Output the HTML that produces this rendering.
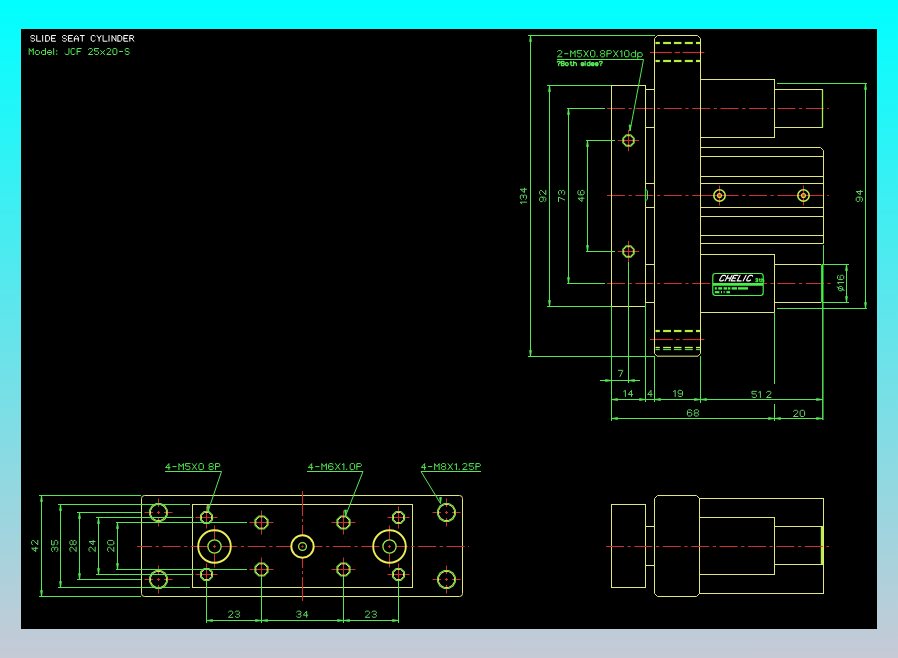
<!DOCTYPE html>
<html><head><meta charset="utf-8"><style>
html,body{margin:0;padding:0;width:898px;height:658px;overflow:hidden}
body{background:linear-gradient(to bottom,#00ffff 0px,#c6cad6 658px)}
#cad{position:absolute;left:21px;top:29px;width:856px;height:600px;background:#000}
svg{position:absolute;left:0;top:0}
text{font-family:"Liberation Sans",sans-serif}
</style></head><body>
<div id="cad"></div>
<svg width="898" height="658" viewBox="0 0 898 658">
<line x1="607" y1="108.5" x2="829" y2="108.5" stroke="#cc3030" stroke-width="1.2" stroke-dasharray="18 3.6 3.2 3.6" stroke-dashoffset="0"/>
<line x1="607" y1="195.5" x2="829" y2="195.5" stroke="#cc3030" stroke-width="1.2" stroke-dasharray="18 3.6 3.2 3.6" stroke-dashoffset="0"/>
<line x1="607" y1="283.5" x2="832" y2="283.5" stroke="#cc3030" stroke-width="1.2" stroke-dasharray="18 3.6 3.2 3.6" stroke-dashoffset="0"/>
<line x1="650" y1="52.5" x2="671.8" y2="52.5" stroke="#cc3030" stroke-width="1.2" />
<line x1="674.7" y1="52.5" x2="680.1" y2="52.5" stroke="#cc3030" stroke-width="1.2" />
<line x1="682.6" y1="52.5" x2="704.3" y2="52.5" stroke="#cc3030" stroke-width="1.2" />
<line x1="650" y1="339.5" x2="672.9" y2="339.5" stroke="#cc3030" stroke-width="1.2" />
<line x1="675.8" y1="339.5" x2="679.7" y2="339.5" stroke="#cc3030" stroke-width="1.2" />
<line x1="682.6" y1="339.5" x2="704.3" y2="339.5" stroke="#cc3030" stroke-width="1.2" />
<rect x="611.5" y="85.5" width="34" height="221" rx="0" fill="none" stroke="#e0e67a" stroke-width="1"/>
<rect x="645.5" y="89.5" width="9" height="213" rx="0" fill="none" stroke="#e0e67a" stroke-width="1"/>
<line x1="645.5" y1="127.5" x2="654.5" y2="127.5" stroke="#e0e67a" stroke-width="1" />
<line x1="645.5" y1="183.5" x2="654.5" y2="183.5" stroke="#e0e67a" stroke-width="1" />
<line x1="645.5" y1="207.5" x2="654.5" y2="207.5" stroke="#e0e67a" stroke-width="1" />
<line x1="645.5" y1="264.5" x2="654.5" y2="264.5" stroke="#e0e67a" stroke-width="1" />
<path d="M654.5 353.5 L654.5 38.5 L657.5 35.5 L697.5 35.5 L700.5 38.5 L700.5 353.5 L698 356.2 L657 356.2 Z" fill="none" stroke="#e0e67a" stroke-width="1"/>
<line x1="655.5" y1="43" x2="659.8" y2="43" stroke="#b8f040" stroke-width="2.2" />
<line x1="663.1" y1="43" x2="671" y2="43" stroke="#b8f040" stroke-width="2.2" />
<line x1="673.9" y1="43" x2="681.5" y2="43" stroke="#b8f040" stroke-width="2.2" />
<line x1="684.8" y1="43" x2="692.8" y2="43" stroke="#b8f040" stroke-width="2.2" />
<line x1="696" y1="43" x2="700" y2="43" stroke="#b8f040" stroke-width="2.2" />
<line x1="655.5" y1="61" x2="659.8" y2="61" stroke="#b8f040" stroke-width="2.2" />
<line x1="663.1" y1="61" x2="671" y2="61" stroke="#b8f040" stroke-width="2.2" />
<line x1="673.9" y1="61" x2="681.5" y2="61" stroke="#b8f040" stroke-width="2.2" />
<line x1="684.8" y1="61" x2="692.8" y2="61" stroke="#b8f040" stroke-width="2.2" />
<line x1="696" y1="61" x2="700" y2="61" stroke="#b8f040" stroke-width="2.2" />
<line x1="655.5" y1="331" x2="659.8" y2="331" stroke="#b8f040" stroke-width="2.2" />
<line x1="663.1" y1="331" x2="671" y2="331" stroke="#b8f040" stroke-width="2.2" />
<line x1="673.9" y1="331" x2="681.5" y2="331" stroke="#b8f040" stroke-width="2.2" />
<line x1="684.8" y1="331" x2="692.8" y2="331" stroke="#b8f040" stroke-width="2.2" />
<line x1="696" y1="331" x2="700" y2="331" stroke="#b8f040" stroke-width="2.2" />
<line x1="655.5" y1="347.5" x2="659.8" y2="347.5" stroke="#d8e860" stroke-width="1.3" />
<line x1="663.1" y1="347.5" x2="671" y2="347.5" stroke="#d8e860" stroke-width="1.3" />
<line x1="673.9" y1="347.5" x2="681.5" y2="347.5" stroke="#d8e860" stroke-width="1.3" />
<line x1="684.8" y1="347.5" x2="692.8" y2="347.5" stroke="#d8e860" stroke-width="1.3" />
<line x1="696" y1="347.5" x2="700" y2="347.5" stroke="#d8e860" stroke-width="1.3" />
<line x1="655.5" y1="349.5" x2="659.8" y2="349.5" stroke="#50d850" stroke-width="1.3" />
<line x1="663.1" y1="349.5" x2="671" y2="349.5" stroke="#50d850" stroke-width="1.3" />
<line x1="673.9" y1="349.5" x2="681.5" y2="349.5" stroke="#50d850" stroke-width="1.3" />
<line x1="684.8" y1="349.5" x2="692.8" y2="349.5" stroke="#50d850" stroke-width="1.3" />
<line x1="696" y1="349.5" x2="700" y2="349.5" stroke="#50d850" stroke-width="1.3" />
<rect x="700.5" y="79.5" width="74" height="58" rx="0" fill="none" stroke="#e0e67a" stroke-width="1"/>
<rect x="774.5" y="89.5" width="48" height="38" rx="0" fill="none" stroke="#e0e67a" stroke-width="1"/>
<line x1="822.5" y1="89.5" x2="822.5" y2="127.5" stroke="#a8ec48" stroke-width="1.3" />
<path d="M700.5 147.5 L820.5 147.5 L823.5 150.5 L823.5 243.5 L700.5 243.5" fill="none" stroke="#e0e67a" stroke-width="1"/>
<line x1="700.5" y1="156.5" x2="823.5" y2="156.5" stroke="#e0e67a" stroke-width="1" />
<line x1="700.5" y1="176.5" x2="823.5" y2="176.5" stroke="#e0e67a" stroke-width="1" />
<line x1="700.5" y1="183.5" x2="823.5" y2="183.5" stroke="#e0e67a" stroke-width="1" />
<line x1="700.5" y1="207.5" x2="823.5" y2="207.5" stroke="#e0e67a" stroke-width="1" />
<line x1="700.5" y1="216.5" x2="823.5" y2="216.5" stroke="#e0e67a" stroke-width="1" />
<line x1="700.5" y1="235.5" x2="823.5" y2="235.5" stroke="#e0e67a" stroke-width="1" />
<rect x="700.5" y="254.5" width="74" height="58" rx="0" fill="none" stroke="#e0e67a" stroke-width="1"/>
<path d="M821 264.5 L774.5 264.5 L774.5 302.5 L821 302.5" fill="none" stroke="#e0e67a" stroke-width="1"/>
<line x1="823.5" y1="245" x2="823.5" y2="264.5" stroke="#55e655" stroke-width="1" />
<line x1="822.3" y1="264.5" x2="822.3" y2="302.5" stroke="#40f040" stroke-width="2.4" />
<line x1="822.8" y1="302.5" x2="822.8" y2="420" stroke="#50e050" stroke-width="1.5" />
<line x1="617.8" y1="140.5" x2="639.2" y2="140.5" stroke="#cc3030" stroke-width="1" />
<line x1="628.5" y1="129.8" x2="628.5" y2="151.2" stroke="#cc3030" stroke-width="1" />
<polygon points="634.20,142.86 630.86,146.20 626.14,146.20 622.80,142.86 622.80,138.14 626.14,134.80 630.86,134.80 634.20,138.14" fill="none" stroke="#6ee63e" stroke-width="1.1"/>
<polygon points="633.27,142.48 630.48,145.27 626.52,145.27 623.73,142.48 623.73,138.52 626.52,135.73 630.48,135.73 633.27,138.52" fill="none" stroke="#e6ea6c" stroke-width="1.0"/>
<line x1="617.8" y1="251.5" x2="639.2" y2="251.5" stroke="#cc3030" stroke-width="1" />
<line x1="628.5" y1="240.8" x2="628.5" y2="262.2" stroke="#cc3030" stroke-width="1" />
<polygon points="634.20,253.86 630.86,257.20 626.14,257.20 622.80,253.86 622.80,249.14 626.14,245.80 630.86,245.80 634.20,249.14" fill="none" stroke="#6ee63e" stroke-width="1.1"/>
<polygon points="633.27,253.48 630.48,256.27 626.52,256.27 623.73,253.48 623.73,249.52 626.52,246.73 630.48,246.73 633.27,249.52" fill="none" stroke="#e6ea6c" stroke-width="1.0"/>
<line x1="709.5" y1="195.5" x2="729.5" y2="195.5" stroke="#cc3030" stroke-width="1" />
<line x1="719.5" y1="185.5" x2="719.5" y2="205.5" stroke="#cc3030" stroke-width="1" />
<circle cx="719.5" cy="195.5" r="5.7" fill="none" stroke="#c0f048" stroke-width="1.6"/>
<circle cx="719.5" cy="195.5" r="1.9" fill="none" stroke="#f0d040" stroke-width="1.3"/>
<line x1="793.5" y1="195.5" x2="813.5" y2="195.5" stroke="#cc3030" stroke-width="1" />
<line x1="803.5" y1="185.5" x2="803.5" y2="205.5" stroke="#cc3030" stroke-width="1" />
<circle cx="803.5" cy="195.5" r="5.7" fill="none" stroke="#c0f048" stroke-width="1.6"/>
<circle cx="803.5" cy="195.5" r="1.9" fill="none" stroke="#f0d040" stroke-width="1.3"/>
<line x1="645.5" y1="188.5" x2="645.5" y2="201.5" stroke="#50e050" stroke-width="1.3" />
<path d="M645.5 189 L647.5 191 L647.5 199 L645.5 201" fill="none" stroke="#50e050" stroke-width="1"/>
<path d="M715.5 273.5 L760.5 273.5 Q763.2 273.5 763.2 276.2 L763.2 292.8 Q763.2 295.5 760.5 295.5 L715.5 295.5 Q712.8 295.5 712.8 292.8 L712.8 276.2 Q712.8 273.5 715.5 273.5 Z" fill="#000" stroke="#48f048" stroke-width="1.2"/>
<line x1="713" y1="284.4" x2="763" y2="284.4" stroke="#48f048" stroke-width="2.8" />
<path d="M725.60 276.25 L725.10 275.32 L723.10 275.32 L721.60 276.25 L719.60 279.97 L720.10 280.90 L722.10 280.90 L723.60 279.97 M725.10 280.90 L728.10 275.32 M729.10 280.90 L732.10 275.32 M726.60 278.11 L730.60 278.11 M738.10 275.32 L734.10 275.32 L731.10 280.90 L735.10 280.90 M732.60 278.11 L735.60 278.11 M740.10 275.32 L737.10 280.90 L741.10 280.90 M743.10 280.90 L746.10 275.32 M752.60 276.25 L752.10 275.32 L750.10 275.32 L748.60 276.25 L746.60 279.97 L747.10 280.90 L749.10 280.90 L750.60 279.97" fill="none" stroke="#ffffff" stroke-width="1.15" stroke-linecap="round" stroke-linejoin="round"/>
<path d="M755.80 279.05 L756.30 278.50 L757.30 278.50 L757.80 279.05 L757.80 279.60 L757.30 280.15 L756.55 280.15 M757.30 280.15 L757.80 280.70 L757.80 281.25 L757.30 281.80 L756.30 281.80 L755.80 281.25 M759.80 278.50 L759.80 281.25 L760.30 281.80 L760.80 281.80 M759.30 279.60 L760.30 279.60 M761.80 278.50 L761.80 281.80 M761.80 280.15 L762.30 279.60 L763.30 279.60 L763.80 280.15 L763.80 281.80" fill="none" stroke="#48f048" stroke-width="1.1" stroke-linecap="round" stroke-linejoin="round"/>
<line x1="714.8" y1="288.4" x2="716.8" y2="288.4" stroke="#48f048" stroke-width="2.4" />
<line x1="718.2" y1="288.4" x2="722.2" y2="288.4" stroke="#48f048" stroke-width="2.4" />
<line x1="723.6" y1="288.4" x2="727" y2="288.4" stroke="#48f048" stroke-width="2.4" />
<line x1="727.8" y1="288.4" x2="730.4" y2="288.4" stroke="#48f048" stroke-width="2.4" />
<line x1="731.6" y1="288.4" x2="737" y2="288.4" stroke="#48f048" stroke-width="2.4" />
<line x1="738" y1="288.4" x2="748" y2="288.4" stroke="#48f048" stroke-width="2.4" />
<line x1="714.8" y1="292.2" x2="719.4" y2="292.2" stroke="#48f048" stroke-width="2.2" />
<line x1="721" y1="292.2" x2="722" y2="292.2" stroke="#48f048" stroke-width="2.2" />
<line x1="723.6" y1="292.2" x2="724.6" y2="292.2" stroke="#48f048" stroke-width="2.2" />
<line x1="726.4" y1="292.2" x2="730" y2="292.2" stroke="#48f048" stroke-width="2.2" />
<line x1="528" y1="35.5" x2="655" y2="35.5" stroke="#55e655" stroke-width="1" />
<line x1="530.5" y1="35.5" x2="530.5" y2="356.5" stroke="#55e655" stroke-width="1" />
<path d="M530.5 35.5 L529.6 41.5 L531.4 41.5 Z" fill="#55e655" stroke="#55e655" stroke-width="0.8"/>
<path d="M530.5 356.5 L529.6 350.5 L531.4 350.5 Z" fill="#55e655" stroke="#55e655" stroke-width="0.8"/>
<line x1="528" y1="356.5" x2="655" y2="356.5" stroke="#55e655" stroke-width="1" />
<line x1="547" y1="85.5" x2="611" y2="85.5" stroke="#55e655" stroke-width="1" />
<line x1="549.5" y1="85.5" x2="549.5" y2="306.5" stroke="#55e655" stroke-width="1" />
<path d="M549.5 85.5 L548.6 91.5 L550.4 91.5 Z" fill="#55e655" stroke="#55e655" stroke-width="0.8"/>
<path d="M549.5 306.5 L548.6 300.5 L550.4 300.5 Z" fill="#55e655" stroke="#55e655" stroke-width="0.8"/>
<line x1="547" y1="306.5" x2="611" y2="306.5" stroke="#55e655" stroke-width="1" />
<line x1="567" y1="108.5" x2="605" y2="108.5" stroke="#55e655" stroke-width="1" />
<line x1="568.5" y1="108.5" x2="568.5" y2="283.5" stroke="#55e655" stroke-width="1" />
<path d="M568.5 108.5 L567.6 114.5 L569.4 114.5 Z" fill="#55e655" stroke="#55e655" stroke-width="0.8"/>
<path d="M568.5 283.5 L567.6 277.5 L569.4 277.5 Z" fill="#55e655" stroke="#55e655" stroke-width="0.8"/>
<line x1="567" y1="283.5" x2="605" y2="283.5" stroke="#55e655" stroke-width="1" />
<line x1="586" y1="140.5" x2="615" y2="140.5" stroke="#55e655" stroke-width="1" />
<line x1="587.5" y1="140.5" x2="587.5" y2="251.5" stroke="#55e655" stroke-width="1" />
<path d="M587.5 140.5 L586.6 146.5 L588.4 146.5 Z" fill="#55e655" stroke="#55e655" stroke-width="0.8"/>
<path d="M587.5 251.5 L586.6 245.5 L588.4 245.5 Z" fill="#55e655" stroke="#55e655" stroke-width="0.8"/>
<line x1="586" y1="251.5" x2="615" y2="251.5" stroke="#55e655" stroke-width="1" />
<path d="M515.56 194.15 L517.24 192.91 L517.24 199.09 M520.04 193.94 L521.16 192.91 L523.40 192.91 L524.52 193.94 L524.52 194.97 L523.40 196.00 L521.72 196.00 M523.40 196.00 L524.52 197.03 L524.52 198.06 L523.40 199.09 L521.16 199.09 L520.04 198.06 M530.12 199.09 L530.12 192.91 L526.76 197.03 L531.24 197.03" fill="none" stroke="#62d462" stroke-width="1" stroke-linecap="round" stroke-linejoin="round" transform="rotate(-90 523.4 196)"/>
<path d="M537.10 198.06 L538.22 199.09 L540.46 199.09 L541.58 198.06 L541.58 193.94 L540.46 192.91 L538.22 192.91 L537.10 193.94 L537.10 195.49 L538.22 196.52 L540.46 196.52 L541.58 195.49 M543.82 193.94 L544.94 192.91 L547.18 192.91 L548.30 193.94 L548.30 194.97 L543.82 199.09 L548.30 199.09" fill="none" stroke="#62d462" stroke-width="1" stroke-linecap="round" stroke-linejoin="round" transform="rotate(-90 542.7 196)"/>
<path d="M556.00 192.91 L560.48 192.91 L557.68 199.09 M562.72 193.94 L563.84 192.91 L566.08 192.91 L567.20 193.94 L567.20 194.97 L566.08 196.00 L564.40 196.00 M566.08 196.00 L567.20 197.03 L567.20 198.06 L566.08 199.09 L563.84 199.09 L562.72 198.06" fill="none" stroke="#62d462" stroke-width="1" stroke-linecap="round" stroke-linejoin="round" transform="rotate(-90 561.6 196)"/>
<path d="M578.76 199.09 L578.76 192.91 L575.40 197.03 L579.88 197.03 M586.60 193.94 L585.48 192.91 L583.24 192.91 L582.12 193.94 L582.12 198.06 L583.24 199.09 L585.48 199.09 L586.60 198.06 L586.60 196.52 L585.48 195.49 L583.24 195.49 L582.12 196.52" fill="none" stroke="#62d462" stroke-width="1" stroke-linecap="round" stroke-linejoin="round" transform="rotate(-90 581 196)"/>
<line x1="777" y1="83.5" x2="867" y2="83.5" stroke="#55e655" stroke-width="1" />
<line x1="777" y1="308.5" x2="867" y2="308.5" stroke="#55e655" stroke-width="1" />
<line x1="865.5" y1="83.5" x2="865.5" y2="308.5" stroke="#55e655" stroke-width="1" />
<path d="M865.5 83.5 L864.6 89.5 L866.4 89.5 Z" fill="#55e655" stroke="#55e655" stroke-width="0.8"/>
<path d="M865.5 308.5 L864.6 302.5 L866.4 302.5 Z" fill="#55e655" stroke="#55e655" stroke-width="0.8"/>
<path d="M853.70 198.06 L854.82 199.09 L857.06 199.09 L858.18 198.06 L858.18 193.94 L857.06 192.91 L854.82 192.91 L853.70 193.94 L853.70 195.49 L854.82 196.52 L857.06 196.52 L858.18 195.49 M863.78 199.09 L863.78 192.91 L860.42 197.03 L864.90 197.03" fill="none" stroke="#62d462" stroke-width="1" stroke-linecap="round" stroke-linejoin="round" transform="rotate(-90 859.3 196)"/>
<line x1="822" y1="264.5" x2="849" y2="264.5" stroke="#55e655" stroke-width="1" />
<line x1="822" y1="302.5" x2="849" y2="302.5" stroke="#55e655" stroke-width="1" />
<line x1="846.5" y1="264.5" x2="846.5" y2="302.5" stroke="#55e655" stroke-width="1" />
<path d="M846.5 264.5 L845.6 270.5 L847.4 270.5 Z" fill="#55e655" stroke="#55e655" stroke-width="0.8"/>
<path d="M846.5 302.5 L845.6 296.5 L847.4 296.5 Z" fill="#55e655" stroke="#55e655" stroke-width="0.8"/>
<path d="M833.88 285.06 L836.12 285.06 L837.24 284.03 L837.24 281.97 L836.12 280.94 L833.88 280.94 L832.76 281.97 L832.76 284.03 L833.88 285.06 M836.68 279.39 L833.32 286.60 M839.48 281.15 L841.16 279.91 L841.16 286.09 M848.44 280.94 L847.32 279.91 L845.08 279.91 L843.96 280.94 L843.96 285.06 L845.08 286.09 L847.32 286.09 L848.44 285.06 L848.44 283.51 L847.32 282.48 L845.08 282.48 L843.96 283.51" fill="none" stroke="#62d462" stroke-width="1" stroke-linecap="round" stroke-linejoin="round" transform="rotate(-90 840.6 283)"/>
<line x1="611.5" y1="306" x2="611.5" y2="421" stroke="#55e655" stroke-width="1" />
<line x1="628.5" y1="262" x2="628.5" y2="383" stroke="#55e655" stroke-width="1" />
<line x1="645.5" y1="303" x2="645.5" y2="402" stroke="#55e655" stroke-width="1" />
<line x1="654.5" y1="356" x2="654.5" y2="402" stroke="#55e655" stroke-width="1" />
<line x1="700.5" y1="356" x2="700.5" y2="403" stroke="#55e655" stroke-width="1" />
<line x1="774.5" y1="312" x2="774.5" y2="384" stroke="#55e655" stroke-width="1" />
<line x1="774.5" y1="404" x2="774.5" y2="421" stroke="#55e655" stroke-width="1" />
<line x1="600" y1="380.5" x2="640" y2="380.5" stroke="#55e655" stroke-width="1" />
<path d="M611.5 380.5 L605.5 379.6 L605.5 381.4 Z" fill="#55e655" stroke="#55e655" stroke-width="0.8"/>
<path d="M628.5 380.5 L634.5 379.6 L634.5 381.4 Z" fill="#55e655" stroke="#55e655" stroke-width="0.8"/>
<path d="M618.36 370.32 L622.84 370.32 L620.04 376.50" fill="none" stroke="#62d462" stroke-width="1" stroke-linecap="round" stroke-linejoin="round"/>
<line x1="611.5" y1="399.5" x2="823" y2="399.5" stroke="#55e655" stroke-width="1" />
<path d="M611.5 399.5 L617.5 398.6 L617.5 400.4 Z" fill="#55e655" stroke="#55e655" stroke-width="0.8"/>
<path d="M645.5 399.5 L639.5 398.6 L639.5 400.4 Z" fill="#55e655" stroke="#55e655" stroke-width="0.8"/>
<path d="M654.5 399.5 L660.5 398.6 L660.5 400.4 Z" fill="#55e655" stroke="#55e655" stroke-width="0.8"/>
<path d="M700.5 399.5 L694.5 398.6 L694.5 400.4 Z" fill="#55e655" stroke="#55e655" stroke-width="0.8"/>
<path d="M700.5 399.5 L706.5 398.6 L706.5 400.4 Z" fill="#55e655" stroke="#55e655" stroke-width="0.8"/>
<path d="M822.5 399.5 L816.5 398.6 L816.5 400.4 Z" fill="#55e655" stroke="#55e655" stroke-width="0.8"/>
<path d="M623.72 391.56 L625.40 390.32 L625.40 396.50 M631.56 396.50 L631.56 390.32 L628.20 394.44 L632.68 394.44" fill="none" stroke="#62d462" stroke-width="1" stroke-linecap="round" stroke-linejoin="round"/>
<path d="M651.02 396.50 L651.02 390.32 L647.66 394.44 L652.14 394.44" fill="none" stroke="#62d462" stroke-width="1" stroke-linecap="round" stroke-linejoin="round"/>
<path d="M673.52 391.56 L675.20 390.32 L675.20 396.50 M678.00 395.47 L679.12 396.50 L681.36 396.50 L682.48 395.47 L682.48 391.35 L681.36 390.32 L679.12 390.32 L678.00 391.35 L678.00 392.89 L679.12 393.93 L681.36 393.93 L682.48 392.89" fill="none" stroke="#62d462" stroke-width="1" stroke-linecap="round" stroke-linejoin="round"/>
<path d="M756.46 391.32 L751.98 391.32 L751.98 393.89 L755.34 393.89 L756.46 394.93 L756.46 396.47 L755.34 397.50 L753.10 397.50 L751.98 396.47 M758.70 392.56 L760.38 391.32 L760.38 397.50 M766.54 392.35 L767.66 391.32 L769.90 391.32 L771.02 392.35 L771.02 393.38 L766.54 397.50 L771.02 397.50" fill="none" stroke="#62d462" stroke-width="1" stroke-linecap="round" stroke-linejoin="round"/>
<line x1="611.5" y1="418.5" x2="823" y2="418.5" stroke="#55e655" stroke-width="1" />
<path d="M611.5 418.5 L617.5 417.6 L617.5 419.4 Z" fill="#55e655" stroke="#55e655" stroke-width="0.8"/>
<path d="M774.5 418.5 L768.5 417.6 L768.5 419.4 Z" fill="#55e655" stroke="#55e655" stroke-width="0.8"/>
<path d="M774.5 418.5 L780.5 417.6 L780.5 419.4 Z" fill="#55e655" stroke="#55e655" stroke-width="0.8"/>
<path d="M822.5 418.5 L816.5 417.6 L816.5 419.4 Z" fill="#55e655" stroke="#55e655" stroke-width="0.8"/>
<path d="M691.88 410.85 L690.76 409.82 L688.52 409.82 L687.40 410.85 L687.40 414.97 L688.52 416.00 L690.76 416.00 L691.88 414.97 L691.88 413.43 L690.76 412.39 L688.52 412.39 L687.40 413.43 M695.24 412.91 L694.12 411.88 L694.12 410.85 L695.24 409.82 L697.48 409.82 L698.60 410.85 L698.60 411.88 L697.48 412.91 L695.24 412.91 L694.12 413.94 L694.12 414.97 L695.24 416.00 L697.48 416.00 L698.60 414.97 L698.60 413.94 L697.48 412.91" fill="none" stroke="#62d462" stroke-width="1" stroke-linecap="round" stroke-linejoin="round"/>
<path d="M793.40 411.35 L794.52 410.32 L796.76 410.32 L797.88 411.35 L797.88 412.38 L793.40 416.50 L797.88 416.50 M801.24 416.50 L803.48 416.50 L804.60 415.47 L804.60 411.35 L803.48 410.32 L801.24 410.32 L800.12 411.35 L800.12 415.47 L801.24 416.50" fill="none" stroke="#62d462" stroke-width="1" stroke-linecap="round" stroke-linejoin="round"/>
<path d="M557.50 51.65 L558.60 50.62 L560.80 50.62 L561.90 51.65 L561.90 52.68 L557.50 56.80 L561.90 56.80 M564.65 53.71 L567.95 53.71 M570.70 56.80 L570.70 50.62 L572.90 53.71 L575.10 50.62 L575.10 56.80 M581.70 50.62 L577.30 50.62 L577.30 53.20 L580.60 53.20 L581.70 54.22 L581.70 55.77 L580.60 56.80 L578.40 56.80 L577.30 55.77 M583.90 56.80 L588.30 50.62 M583.90 50.62 L588.30 56.80 M591.60 56.80 L593.80 56.80 L594.90 55.77 L594.90 51.65 L593.80 50.62 L591.60 50.62 L590.50 51.65 L590.50 55.77 L591.60 56.80 M597.10 56.80 L597.10 56.18 M601.50 53.71 L600.40 52.68 L600.40 51.65 L601.50 50.62 L603.70 50.62 L604.80 51.65 L604.80 52.68 L603.70 53.71 L601.50 53.71 L600.40 54.74 L600.40 55.77 L601.50 56.80 L603.70 56.80 L604.80 55.77 L604.80 54.74 L603.70 53.71 M607.00 56.80 L607.00 50.62 L610.30 50.62 L611.40 51.65 L611.40 52.68 L610.30 53.71 L607.00 53.71 M613.60 56.80 L618.00 50.62 M613.60 50.62 L618.00 56.80 M620.20 51.86 L621.85 50.62 L621.85 56.80 M625.70 56.80 L627.90 56.80 L629.00 55.77 L629.00 51.65 L627.90 50.62 L625.70 50.62 L624.60 51.65 L624.60 55.77 L625.70 56.80 M635.60 50.62 L635.60 56.80 M635.60 55.77 L634.50 56.80 L632.30 56.80 L631.20 55.77 L631.20 53.71 L632.30 52.68 L634.50 52.68 L635.60 53.71 M637.80 52.68 L637.80 58.86 M637.80 53.71 L638.90 52.68 L641.10 52.68 L642.20 53.71 L642.20 55.77 L641.10 56.80 L638.90 56.80 L637.80 55.77" fill="none" stroke="#55e655" stroke-width="1" stroke-linecap="round" stroke-linejoin="round"/>
<path d="M557.30 62.00 L557.98 61.30 L559.34 61.30 L560.02 62.00 L560.02 62.70 L558.66 63.75 L558.66 64.45 M558.66 65.08 L558.66 65.50 M561.38 65.50 L561.38 61.30 L563.42 61.30 L564.10 62.00 L564.10 62.70 L563.42 63.40 L561.38 63.40 M563.42 63.40 L564.10 64.10 L564.10 64.80 L563.42 65.50 L561.38 65.50 M566.14 65.50 L567.50 65.50 L568.18 64.80 L568.18 63.40 L567.50 62.70 L566.14 62.70 L565.46 63.40 L565.46 64.80 L566.14 65.50 M570.90 61.30 L570.90 64.80 L571.58 65.50 L572.26 65.50 M570.22 62.70 L571.58 62.70 M573.62 61.30 L573.62 65.50 M573.62 63.40 L574.30 62.70 L575.66 62.70 L576.34 63.40 L576.34 65.50 M583.82 63.40 L583.14 62.70 L581.78 62.70 L581.10 63.40 L581.78 64.10 L583.14 64.10 L583.82 64.80 L583.14 65.50 L581.78 65.50 L581.10 64.80 M585.18 65.50 L585.18 62.70 M585.18 61.79 L585.18 61.30 M589.94 61.30 L589.94 65.50 M589.94 64.80 L589.26 65.50 L587.90 65.50 L587.22 64.80 L587.22 63.40 L587.90 62.70 L589.26 62.70 L589.94 63.40 M591.30 64.10 L594.02 64.10 L594.02 63.40 L593.34 62.70 L591.98 62.70 L591.30 63.40 L591.30 64.80 L591.98 65.50 L593.34 65.50 L594.02 64.80 M598.10 63.40 L597.42 62.70 L596.06 62.70 L595.38 63.40 L596.06 64.10 L597.42 64.10 L598.10 64.80 L597.42 65.50 L596.06 65.50 L595.38 64.80 M599.46 62.00 L600.14 61.30 L601.50 61.30 L602.18 62.00 L602.18 62.70 L600.82 63.75 L600.82 64.45 M600.82 65.08 L600.82 65.50" fill="none" stroke="#55e655" stroke-width="1.3" stroke-linecap="round" stroke-linejoin="round"/>
<line x1="557" y1="59.5" x2="643.5" y2="59.5" stroke="#55e655" stroke-width="1" />
<line x1="643.5" y1="59.5" x2="630" y2="131" stroke="#55e655" stroke-width="1" />
<path d="M630 131 L629.1 125 L630.9 125 Z" fill="#55e655" stroke="#55e655" stroke-width="0.8"/>
<path d="M144.5 495.5 L459.5 495.5 Q462.5 495.5 462.5 498.5 L462.5 593.5 Q462.5 596.5 459.5 596.5 L144.5 596.5 Q141.5 596.5 141.5 593.5 L141.5 498.5 Q141.5 495.5 144.5 495.5 Z" fill="none" stroke="#e0e67a" stroke-width="1"/>
<rect x="192.5" y="504.5" width="220" height="83" rx="0" fill="none" stroke="#e0e67a" stroke-width="1"/>
<line x1="137" y1="546.5" x2="469" y2="546.5" stroke="#cc3030" stroke-width="1.2" stroke-dasharray="18 3.6 3.2 3.6" stroke-dashoffset="2.9"/>
<line x1="302.5" y1="491" x2="302.5" y2="516" stroke="#cc3030" stroke-width="1.1" />
<line x1="302.5" y1="519" x2="302.5" y2="522" stroke="#cc3030" stroke-width="1.1" />
<line x1="302.5" y1="525" x2="302.5" y2="538" stroke="#cc3030" stroke-width="1.1" />
<line x1="302.5" y1="545" x2="302.5" y2="548" stroke="#cc3030" stroke-width="1.1" />
<line x1="302.5" y1="555" x2="302.5" y2="568" stroke="#cc3030" stroke-width="1.1" />
<line x1="302.5" y1="571" x2="302.5" y2="574" stroke="#cc3030" stroke-width="1.1" />
<line x1="302.5" y1="577" x2="302.5" y2="601" stroke="#cc3030" stroke-width="1.1" />
<line x1="144.5" y1="512.5" x2="153.0" y2="512.5" stroke="#cc3030" stroke-width="1" />
<line x1="164.0" y1="512.5" x2="172.5" y2="512.5" stroke="#cc3030" stroke-width="1" />
<line x1="157.0" y1="512.5" x2="160.0" y2="512.5" stroke="#cc3030" stroke-width="1" />
<line x1="158.5" y1="498.5" x2="158.5" y2="507.0" stroke="#cc3030" stroke-width="1" />
<line x1="158.5" y1="518.0" x2="158.5" y2="526.5" stroke="#cc3030" stroke-width="1" />
<line x1="158.5" y1="511.0" x2="158.5" y2="514.0" stroke="#cc3030" stroke-width="1" />
<polygon points="167.38,514.88 165.00,519.00 160.88,521.38 156.12,521.38 152.00,519.00 149.62,514.88 149.62,510.12 152.00,506.00 156.12,503.62 160.88,503.62 165.00,506.00 167.38,510.12" fill="none" stroke="#6ee63e" stroke-width="1.1"/>
<polygon points="166.42,514.62 164.30,518.30 160.62,520.42 156.38,520.42 152.70,518.30 150.58,514.62 150.58,510.38 152.70,506.70 156.38,504.58 160.62,504.58 164.30,506.70 166.42,510.38" fill="none" stroke="#e6ea6c" stroke-width="1.0"/>
<line x1="144.5" y1="579.5" x2="153.0" y2="579.5" stroke="#cc3030" stroke-width="1" />
<line x1="164.0" y1="579.5" x2="172.5" y2="579.5" stroke="#cc3030" stroke-width="1" />
<line x1="157.0" y1="579.5" x2="160.0" y2="579.5" stroke="#cc3030" stroke-width="1" />
<line x1="158.5" y1="565.5" x2="158.5" y2="574.0" stroke="#cc3030" stroke-width="1" />
<line x1="158.5" y1="585.0" x2="158.5" y2="593.5" stroke="#cc3030" stroke-width="1" />
<line x1="158.5" y1="578.0" x2="158.5" y2="581.0" stroke="#cc3030" stroke-width="1" />
<polygon points="167.38,581.88 165.00,586.00 160.88,588.38 156.12,588.38 152.00,586.00 149.62,581.88 149.62,577.12 152.00,573.00 156.12,570.62 160.88,570.62 165.00,573.00 167.38,577.12" fill="none" stroke="#6ee63e" stroke-width="1.1"/>
<polygon points="166.42,581.62 164.30,585.30 160.62,587.42 156.38,587.42 152.70,585.30 150.58,581.62 150.58,577.38 152.70,573.70 156.38,571.58 160.62,571.58 164.30,573.70 166.42,577.38" fill="none" stroke="#e6ea6c" stroke-width="1.0"/>
<line x1="432.5" y1="512.5" x2="441.0" y2="512.5" stroke="#cc3030" stroke-width="1" />
<line x1="452.0" y1="512.5" x2="460.5" y2="512.5" stroke="#cc3030" stroke-width="1" />
<line x1="445.0" y1="512.5" x2="448.0" y2="512.5" stroke="#cc3030" stroke-width="1" />
<line x1="446.5" y1="498.5" x2="446.5" y2="507.0" stroke="#cc3030" stroke-width="1" />
<line x1="446.5" y1="518.0" x2="446.5" y2="526.5" stroke="#cc3030" stroke-width="1" />
<line x1="446.5" y1="511.0" x2="446.5" y2="514.0" stroke="#cc3030" stroke-width="1" />
<polygon points="455.38,514.88 453.00,519.00 448.88,521.38 444.12,521.38 440.00,519.00 437.62,514.88 437.62,510.12 440.00,506.00 444.12,503.62 448.88,503.62 453.00,506.00 455.38,510.12" fill="none" stroke="#6ee63e" stroke-width="1.1"/>
<polygon points="454.42,514.62 452.30,518.30 448.62,520.42 444.38,520.42 440.70,518.30 438.58,514.62 438.58,510.38 440.70,506.70 444.38,504.58 448.62,504.58 452.30,506.70 454.42,510.38" fill="none" stroke="#e6ea6c" stroke-width="1.0"/>
<line x1="432.5" y1="579.5" x2="441.0" y2="579.5" stroke="#cc3030" stroke-width="1" />
<line x1="452.0" y1="579.5" x2="460.5" y2="579.5" stroke="#cc3030" stroke-width="1" />
<line x1="445.0" y1="579.5" x2="448.0" y2="579.5" stroke="#cc3030" stroke-width="1" />
<line x1="446.5" y1="565.5" x2="446.5" y2="574.0" stroke="#cc3030" stroke-width="1" />
<line x1="446.5" y1="585.0" x2="446.5" y2="593.5" stroke="#cc3030" stroke-width="1" />
<line x1="446.5" y1="578.0" x2="446.5" y2="581.0" stroke="#cc3030" stroke-width="1" />
<polygon points="455.38,581.88 453.00,586.00 448.88,588.38 444.12,588.38 440.00,586.00 437.62,581.88 437.62,577.12 440.00,573.00 444.12,570.62 448.88,570.62 453.00,573.00 455.38,577.12" fill="none" stroke="#6ee63e" stroke-width="1.1"/>
<polygon points="454.42,581.62 452.30,585.30 448.62,587.42 444.38,587.42 440.70,585.30 438.58,581.62 438.58,577.38 440.70,573.70 444.38,571.58 448.62,571.58 452.30,573.70 454.42,577.38" fill="none" stroke="#e6ea6c" stroke-width="1.0"/>
<line x1="195.5" y1="517.5" x2="217.5" y2="517.5" stroke="#cc3030" stroke-width="1" />
<line x1="206.5" y1="506.5" x2="206.5" y2="528.5" stroke="#cc3030" stroke-width="1" />
<polygon points="212.48,519.98 208.98,523.48 204.02,523.48 200.52,519.98 200.52,515.02 204.02,511.52 208.98,511.52 212.48,515.02" fill="none" stroke="#6ee63e" stroke-width="1.1"/>
<polygon points="211.56,519.60 208.60,522.56 204.40,522.56 201.44,519.60 201.44,515.40 204.40,512.44 208.60,512.44 211.56,515.40" fill="none" stroke="#e6ea6c" stroke-width="1.0"/>
<line x1="195.5" y1="574.5" x2="217.5" y2="574.5" stroke="#cc3030" stroke-width="1" />
<line x1="206.5" y1="563.5" x2="206.5" y2="585.5" stroke="#cc3030" stroke-width="1" />
<polygon points="212.48,576.98 208.98,580.48 204.02,580.48 200.52,576.98 200.52,572.02 204.02,568.52 208.98,568.52 212.48,572.02" fill="none" stroke="#6ee63e" stroke-width="1.1"/>
<polygon points="211.56,576.60 208.60,579.56 204.40,579.56 201.44,576.60 201.44,572.40 204.40,569.44 208.60,569.44 211.56,572.40" fill="none" stroke="#e6ea6c" stroke-width="1.0"/>
<line x1="387.5" y1="517.5" x2="409.5" y2="517.5" stroke="#cc3030" stroke-width="1" />
<line x1="398.5" y1="506.5" x2="398.5" y2="528.5" stroke="#cc3030" stroke-width="1" />
<polygon points="404.48,519.98 400.98,523.48 396.02,523.48 392.52,519.98 392.52,515.02 396.02,511.52 400.98,511.52 404.48,515.02" fill="none" stroke="#6ee63e" stroke-width="1.1"/>
<polygon points="403.56,519.60 400.60,522.56 396.40,522.56 393.44,519.60 393.44,515.40 396.40,512.44 400.60,512.44 403.56,515.40" fill="none" stroke="#e6ea6c" stroke-width="1.0"/>
<line x1="387.5" y1="574.5" x2="409.5" y2="574.5" stroke="#cc3030" stroke-width="1" />
<line x1="398.5" y1="563.5" x2="398.5" y2="585.5" stroke="#cc3030" stroke-width="1" />
<polygon points="404.48,576.98 400.98,580.48 396.02,580.48 392.52,576.98 392.52,572.02 396.02,568.52 400.98,568.52 404.48,572.02" fill="none" stroke="#6ee63e" stroke-width="1.1"/>
<polygon points="403.56,576.60 400.60,579.56 396.40,579.56 393.44,576.60 393.44,572.40 396.40,569.44 400.60,569.44 403.56,572.40" fill="none" stroke="#e6ea6c" stroke-width="1.0"/>
<line x1="249.5" y1="522.5" x2="273.5" y2="522.5" stroke="#cc3030" stroke-width="1" />
<line x1="261.5" y1="510.5" x2="261.5" y2="534.5" stroke="#cc3030" stroke-width="1" />
<polygon points="268.06,525.22 264.22,529.06 258.78,529.06 254.94,525.22 254.94,519.78 258.78,515.94 264.22,515.94 268.06,519.78" fill="none" stroke="#6ee63e" stroke-width="1.1"/>
<polygon points="267.14,524.83 263.83,528.14 259.17,528.14 255.86,524.83 255.86,520.17 259.17,516.86 263.83,516.86 267.14,520.17" fill="none" stroke="#e6ea6c" stroke-width="1.0"/>
<line x1="249.5" y1="569.5" x2="273.5" y2="569.5" stroke="#cc3030" stroke-width="1" />
<line x1="261.5" y1="557.5" x2="261.5" y2="581.5" stroke="#cc3030" stroke-width="1" />
<polygon points="268.06,572.22 264.22,576.06 258.78,576.06 254.94,572.22 254.94,566.78 258.78,562.94 264.22,562.94 268.06,566.78" fill="none" stroke="#6ee63e" stroke-width="1.1"/>
<polygon points="267.14,571.83 263.83,575.14 259.17,575.14 255.86,571.83 255.86,567.17 259.17,563.86 263.83,563.86 267.14,567.17" fill="none" stroke="#e6ea6c" stroke-width="1.0"/>
<line x1="331.5" y1="522.5" x2="355.5" y2="522.5" stroke="#cc3030" stroke-width="1" />
<line x1="343.5" y1="510.5" x2="343.5" y2="534.5" stroke="#cc3030" stroke-width="1" />
<polygon points="350.06,525.22 346.22,529.06 340.78,529.06 336.94,525.22 336.94,519.78 340.78,515.94 346.22,515.94 350.06,519.78" fill="none" stroke="#6ee63e" stroke-width="1.1"/>
<polygon points="349.14,524.83 345.83,528.14 341.17,528.14 337.86,524.83 337.86,520.17 341.17,516.86 345.83,516.86 349.14,520.17" fill="none" stroke="#e6ea6c" stroke-width="1.0"/>
<line x1="331.5" y1="569.5" x2="355.5" y2="569.5" stroke="#cc3030" stroke-width="1" />
<line x1="343.5" y1="557.5" x2="343.5" y2="581.5" stroke="#cc3030" stroke-width="1" />
<polygon points="350.06,572.22 346.22,576.06 340.78,576.06 336.94,572.22 336.94,566.78 340.78,562.94 346.22,562.94 350.06,566.78" fill="none" stroke="#6ee63e" stroke-width="1.1"/>
<polygon points="349.14,571.83 345.83,575.14 341.17,575.14 337.86,571.83 337.86,567.17 341.17,563.86 345.83,563.86 349.14,567.17" fill="none" stroke="#e6ea6c" stroke-width="1.0"/>
<line x1="214.5" y1="525.5" x2="214.5" y2="539.5" stroke="#cc3030" stroke-width="1" />
<line x1="214.5" y1="553.5" x2="214.5" y2="567.5" stroke="#cc3030" stroke-width="1" />
<line x1="214.5" y1="545.0" x2="214.5" y2="548.0" stroke="#cc3030" stroke-width="1" />
<circle cx="214.5" cy="546.5" r="16.3" fill="none" stroke="#ecec58" stroke-width="1.9"/>
<circle cx="214.5" cy="546.5" r="6.6" fill="#000" stroke="#9be84a" stroke-width="1.3"/>
<line x1="213.0" y1="546.5" x2="216.0" y2="546.5" stroke="#cc3030" stroke-width="1" />
<line x1="214.5" y1="545.0" x2="214.5" y2="548.0" stroke="#cc3030" stroke-width="1" />
<line x1="389.5" y1="525.5" x2="389.5" y2="539.5" stroke="#cc3030" stroke-width="1" />
<line x1="389.5" y1="553.5" x2="389.5" y2="567.5" stroke="#cc3030" stroke-width="1" />
<line x1="389.5" y1="545.0" x2="389.5" y2="548.0" stroke="#cc3030" stroke-width="1" />
<circle cx="389.5" cy="546.5" r="16.3" fill="none" stroke="#ecec58" stroke-width="1.9"/>
<circle cx="389.5" cy="546.5" r="6.6" fill="#000" stroke="#9be84a" stroke-width="1.3"/>
<line x1="388.0" y1="546.5" x2="391.0" y2="546.5" stroke="#cc3030" stroke-width="1" />
<line x1="389.5" y1="545.0" x2="389.5" y2="548.0" stroke="#cc3030" stroke-width="1" />
<circle cx="302.5" cy="546.5" r="11.2" fill="#000" stroke="#ecec58" stroke-width="1.9"/>
<circle cx="302.5" cy="546.5" r="3.9" fill="none" stroke="#9be84a" stroke-width="1.3"/>
<line x1="301.3" y1="546.5" x2="303.7" y2="546.5" stroke="#cc3030" stroke-width="1" />
<line x1="302.5" y1="545.3" x2="302.5" y2="547.7" stroke="#cc3030" stroke-width="1" />
<line x1="39" y1="495.5" x2="141" y2="495.5" stroke="#55e655" stroke-width="1" />
<line x1="41.5" y1="495.5" x2="41.5" y2="596.5" stroke="#55e655" stroke-width="1" />
<line x1="39" y1="596.5" x2="141" y2="596.5" stroke="#55e655" stroke-width="1" />
<path d="M41.5 495.5 L40.6 501.5 L42.4 501.5 Z" fill="#55e655" stroke="#55e655" stroke-width="0.8"/>
<path d="M41.5 596.5 L40.6 590.5 L42.4 590.5 Z" fill="#55e655" stroke="#55e655" stroke-width="0.8"/>
<line x1="58" y1="504.5" x2="190" y2="504.5" stroke="#55e655" stroke-width="1" />
<line x1="60.5" y1="504.5" x2="60.5" y2="587.5" stroke="#55e655" stroke-width="1" />
<line x1="58" y1="587.5" x2="190" y2="587.5" stroke="#55e655" stroke-width="1" />
<path d="M60.5 504.5 L59.6 510.5 L61.4 510.5 Z" fill="#55e655" stroke="#55e655" stroke-width="0.8"/>
<path d="M60.5 587.5 L59.6 581.5 L61.4 581.5 Z" fill="#55e655" stroke="#55e655" stroke-width="0.8"/>
<line x1="77" y1="512.5" x2="141" y2="512.5" stroke="#55e655" stroke-width="1" />
<line x1="79.5" y1="512.5" x2="79.5" y2="579.5" stroke="#55e655" stroke-width="1" />
<line x1="77" y1="579.5" x2="141" y2="579.5" stroke="#55e655" stroke-width="1" />
<path d="M79.5 512.5 L78.6 518.5 L80.4 518.5 Z" fill="#55e655" stroke="#55e655" stroke-width="0.8"/>
<path d="M79.5 579.5 L78.6 573.5 L80.4 573.5 Z" fill="#55e655" stroke="#55e655" stroke-width="0.8"/>
<line x1="96" y1="517.5" x2="193.5" y2="517.5" stroke="#55e655" stroke-width="1" />
<line x1="98.5" y1="517.5" x2="98.5" y2="574.5" stroke="#55e655" stroke-width="1" />
<line x1="96" y1="574.5" x2="193.5" y2="574.5" stroke="#55e655" stroke-width="1" />
<path d="M98.5 517.5 L97.6 523.5 L99.4 523.5 Z" fill="#55e655" stroke="#55e655" stroke-width="0.8"/>
<path d="M98.5 574.5 L97.6 568.5 L99.4 568.5 Z" fill="#55e655" stroke="#55e655" stroke-width="0.8"/>
<line x1="116" y1="522.5" x2="247" y2="522.5" stroke="#55e655" stroke-width="1" />
<line x1="117.5" y1="522.5" x2="117.5" y2="569.5" stroke="#55e655" stroke-width="1" />
<line x1="116" y1="569.5" x2="247" y2="569.5" stroke="#55e655" stroke-width="1" />
<path d="M117.5 522.5 L116.6 528.5 L118.4 528.5 Z" fill="#55e655" stroke="#55e655" stroke-width="0.8"/>
<path d="M117.5 569.5 L116.6 563.5 L118.4 563.5 Z" fill="#55e655" stroke="#55e655" stroke-width="0.8"/>
<path d="M32.46 549.09 L32.46 542.91 L29.10 547.03 L33.58 547.03 M35.82 543.94 L36.94 542.91 L39.18 542.91 L40.30 543.94 L40.30 544.97 L35.82 549.09 L40.30 549.09" fill="none" stroke="#62d462" stroke-width="1" stroke-linecap="round" stroke-linejoin="round" transform="rotate(-90 34.7 546)"/>
<path d="M49.10 543.94 L50.22 542.91 L52.46 542.91 L53.58 543.94 L53.58 544.97 L52.46 546.00 L50.78 546.00 M52.46 546.00 L53.58 547.03 L53.58 548.06 L52.46 549.09 L50.22 549.09 L49.10 548.06 M60.30 542.91 L55.82 542.91 L55.82 545.49 L59.18 545.49 L60.30 546.51 L60.30 548.06 L59.18 549.09 L56.94 549.09 L55.82 548.06" fill="none" stroke="#62d462" stroke-width="1" stroke-linecap="round" stroke-linejoin="round" transform="rotate(-90 54.7 546)"/>
<path d="M67.40 543.94 L68.52 542.91 L70.76 542.91 L71.88 543.94 L71.88 544.97 L67.40 549.09 L71.88 549.09 M75.24 546.00 L74.12 544.97 L74.12 543.94 L75.24 542.91 L77.48 542.91 L78.60 543.94 L78.60 544.97 L77.48 546.00 L75.24 546.00 L74.12 547.03 L74.12 548.06 L75.24 549.09 L77.48 549.09 L78.60 548.06 L78.60 547.03 L77.48 546.00" fill="none" stroke="#62d462" stroke-width="1" stroke-linecap="round" stroke-linejoin="round" transform="rotate(-90 73 546)"/>
<path d="M86.50 543.94 L87.62 542.91 L89.86 542.91 L90.98 543.94 L90.98 544.97 L86.50 549.09 L90.98 549.09 M96.58 549.09 L96.58 542.91 L93.22 547.03 L97.70 547.03" fill="none" stroke="#62d462" stroke-width="1" stroke-linecap="round" stroke-linejoin="round" transform="rotate(-90 92.1 546)"/>
<path d="M105.10 543.94 L106.22 542.91 L108.46 542.91 L109.58 543.94 L109.58 544.97 L105.10 549.09 L109.58 549.09 M112.94 549.09 L115.18 549.09 L116.30 548.06 L116.30 543.94 L115.18 542.91 L112.94 542.91 L111.82 543.94 L111.82 548.06 L112.94 549.09" fill="none" stroke="#62d462" stroke-width="1" stroke-linecap="round" stroke-linejoin="round" transform="rotate(-90 110.7 546)"/>
<line x1="206.5" y1="581" x2="206.5" y2="623" stroke="#55e655" stroke-width="1" />
<line x1="261.5" y1="576" x2="261.5" y2="623" stroke="#55e655" stroke-width="1" />
<line x1="343.5" y1="576" x2="343.5" y2="623" stroke="#55e655" stroke-width="1" />
<line x1="398.5" y1="581" x2="398.5" y2="623" stroke="#55e655" stroke-width="1" />
<line x1="206.5" y1="620.5" x2="398.5" y2="620.5" stroke="#55e655" stroke-width="1" />
<path d="M206.5 620.5 L212.5 619.6 L212.5 621.4 Z" fill="#55e655" stroke="#55e655" stroke-width="0.8"/>
<path d="M261.5 620.5 L255.5 619.6 L255.5 621.4 Z" fill="#55e655" stroke="#55e655" stroke-width="0.8"/>
<path d="M261.5 620.5 L267.5 619.6 L267.5 621.4 Z" fill="#55e655" stroke="#55e655" stroke-width="0.8"/>
<path d="M343.5 620.5 L337.5 619.6 L337.5 621.4 Z" fill="#55e655" stroke="#55e655" stroke-width="0.8"/>
<path d="M343.5 620.5 L349.5 619.6 L349.5 621.4 Z" fill="#55e655" stroke="#55e655" stroke-width="0.8"/>
<path d="M398.5 620.5 L392.5 619.6 L392.5 621.4 Z" fill="#55e655" stroke="#55e655" stroke-width="0.8"/>
<path d="M228.40 612.15 L229.52 611.12 L231.76 611.12 L232.88 612.15 L232.88 613.18 L228.40 617.30 L232.88 617.30 M235.12 612.15 L236.24 611.12 L238.48 611.12 L239.60 612.15 L239.60 613.18 L238.48 614.21 L236.80 614.21 M238.48 614.21 L239.60 615.24 L239.60 616.27 L238.48 617.30 L236.24 617.30 L235.12 616.27" fill="none" stroke="#62d462" stroke-width="1" stroke-linecap="round" stroke-linejoin="round"/>
<path d="M296.60 612.15 L297.72 611.12 L299.96 611.12 L301.08 612.15 L301.08 613.18 L299.96 614.21 L298.28 614.21 M299.96 614.21 L301.08 615.24 L301.08 616.27 L299.96 617.30 L297.72 617.30 L296.60 616.27 M306.68 617.30 L306.68 611.12 L303.32 615.24 L307.80 615.24" fill="none" stroke="#62d462" stroke-width="1" stroke-linecap="round" stroke-linejoin="round"/>
<path d="M365.20 612.15 L366.32 611.12 L368.56 611.12 L369.68 612.15 L369.68 613.18 L365.20 617.30 L369.68 617.30 M371.92 612.15 L373.04 611.12 L375.28 611.12 L376.40 612.15 L376.40 613.18 L375.28 614.21 L373.60 614.21 M375.28 614.21 L376.40 615.24 L376.40 616.27 L375.28 617.30 L373.04 617.30 L371.92 616.27" fill="none" stroke="#62d462" stroke-width="1" stroke-linecap="round" stroke-linejoin="round"/>
<path d="M168.93 469.60 L168.93 463.60 L165.60 467.60 L170.04 467.60 M172.81 466.60 L176.14 466.60 M178.92 469.60 L178.92 463.60 L181.14 466.60 L183.36 463.60 L183.36 469.60 M190.02 463.60 L185.58 463.60 L185.58 466.10 L188.91 466.10 L190.02 467.10 L190.02 468.60 L188.91 469.60 L186.69 469.60 L185.58 468.60 M192.24 469.60 L196.68 463.60 M192.24 463.60 L196.68 469.60 M200.01 469.60 L202.23 469.60 L203.34 468.60 L203.34 464.60 L202.23 463.60 L200.01 463.60 L198.90 464.60 L198.90 468.60 L200.01 469.60 M210.00 466.60 L208.89 465.60 L208.89 464.60 L210.00 463.60 L212.22 463.60 L213.33 464.60 L213.33 465.60 L212.22 466.60 L210.00 466.60 L208.89 467.60 L208.89 468.60 L210.00 469.60 L212.22 469.60 L213.33 468.60 L213.33 467.60 L212.22 466.60 M215.55 469.60 L215.55 463.60 L218.88 463.60 L219.99 464.60 L219.99 465.60 L218.88 466.60 L215.55 466.60" fill="none" stroke="#55e655" stroke-width="1" stroke-linecap="round" stroke-linejoin="round"/>
<line x1="165" y1="471.5" x2="221.5" y2="471.5" stroke="#55e655" stroke-width="1" />
<line x1="221.5" y1="471.5" x2="208" y2="511.5" stroke="#55e655" stroke-width="1" />
<path d="M208 511.5 L207.1 505.5 L208.9 505.5 Z" fill="#55e655" stroke="#55e655" stroke-width="0.8"/>
<path d="M311.69 469.60 L311.69 463.60 L308.30 467.60 L312.82 467.60 M315.64 466.60 L319.03 466.60 M321.86 469.60 L321.86 463.60 L324.12 466.60 L326.38 463.60 L326.38 469.60 M333.16 464.60 L332.03 463.60 L329.77 463.60 L328.64 464.60 L328.64 468.60 L329.77 469.60 L332.03 469.60 L333.16 468.60 L333.16 467.10 L332.03 466.10 L329.77 466.10 L328.64 467.10 M335.42 469.60 L339.94 463.60 M335.42 463.60 L339.94 469.60 M342.20 464.80 L343.89 463.60 L343.89 469.60 M346.72 469.60 L346.72 469.00 M351.24 469.60 L353.50 469.60 L354.63 468.60 L354.63 464.60 L353.50 463.60 L351.24 463.60 L350.11 464.60 L350.11 468.60 L351.24 469.60 M356.89 469.60 L356.89 463.60 L360.28 463.60 L361.41 464.60 L361.41 465.60 L360.28 466.60 L356.89 466.60" fill="none" stroke="#55e655" stroke-width="1" stroke-linecap="round" stroke-linejoin="round"/>
<line x1="307" y1="471.5" x2="363" y2="471.5" stroke="#55e655" stroke-width="1" />
<line x1="363" y1="471.5" x2="345.5" y2="516" stroke="#55e655" stroke-width="1" />
<path d="M345.5 516 L344.6 510 L346.4 510 Z" fill="#55e655" stroke="#55e655" stroke-width="0.8"/>
<path d="M424.65 469.60 L424.65 463.60 L421.30 467.60 L425.76 467.60 M428.55 466.60 L431.89 466.60 M434.68 469.60 L434.68 463.60 L436.91 466.60 L439.14 463.60 L439.14 469.60 M442.49 466.60 L441.37 465.60 L441.37 464.60 L442.49 463.60 L444.72 463.60 L445.83 464.60 L445.83 465.60 L444.72 466.60 L442.49 466.60 L441.37 467.60 L441.37 468.60 L442.49 469.60 L444.72 469.60 L445.83 468.60 L445.83 467.60 L444.72 466.60 M448.06 469.60 L452.52 463.60 M448.06 463.60 L452.52 469.60 M454.75 464.80 L456.42 463.60 L456.42 469.60 M459.21 469.60 L459.21 469.00 M462.56 464.60 L463.67 463.60 L465.90 463.60 L467.01 464.60 L467.01 465.60 L462.56 469.60 L467.01 469.60 M473.70 463.60 L469.25 463.60 L469.25 466.10 L472.59 466.10 L473.70 467.10 L473.70 468.60 L472.59 469.60 L470.36 469.60 L469.25 468.60 M475.94 469.60 L475.94 463.60 L479.28 463.60 L480.39 464.60 L480.39 465.60 L479.28 466.60 L475.94 466.60" fill="none" stroke="#55e655" stroke-width="1" stroke-linecap="round" stroke-linejoin="round"/>
<line x1="421" y1="471.5" x2="481" y2="471.5" stroke="#55e655" stroke-width="1" />
<line x1="421" y1="471.5" x2="440.5" y2="503.5" stroke="#55e655" stroke-width="1" />
<path d="M440.5 503.5 L439.6 497.5 L441.4 497.5 Z" fill="#55e655" stroke="#55e655" stroke-width="0.8"/>
<rect x="611.5" y="504.5" width="34" height="83" rx="0" fill="none" stroke="#e0e67a" stroke-width="1"/>
<line x1="645.5" y1="526.5" x2="654.5" y2="526.5" stroke="#e0e67a" stroke-width="1" />
<line x1="645.5" y1="565.5" x2="654.5" y2="565.5" stroke="#e0e67a" stroke-width="1" />
<path d="M657.5 495.5 L696.5 495.5 L699.5 498.5 L699.5 593.5 L696.5 596.5 L657.5 596.5 L654.5 593.5 L654.5 498.5 Z" fill="none" stroke="#e0e67a" stroke-width="1"/>
<rect x="699.5" y="498.5" width="124" height="95" rx="0" fill="none" stroke="#e0e67a" stroke-width="1"/>
<rect x="699.5" y="517.5" width="75" height="57" rx="0" fill="none" stroke="#e0e67a" stroke-width="1"/>
<rect x="774.5" y="526.5" width="48" height="38" rx="0" fill="none" stroke="#e0e67a" stroke-width="1"/>
<line x1="821.8" y1="526.5" x2="821.8" y2="564.5" stroke="#b8f040" stroke-width="2" />
<line x1="606" y1="546.5" x2="829" y2="546.5" stroke="#cc3030" stroke-width="1.2" stroke-dasharray="18 3.6 3.2 3.6" stroke-dashoffset="0"/>
<path d="M34.76 36.45 L33.77 35.50 L31.79 35.50 L30.80 36.45 L30.80 37.40 L31.79 38.35 L33.77 38.35 L34.76 39.30 L34.76 40.25 L33.77 41.20 L31.79 41.20 L30.80 40.25 M36.74 35.50 L36.74 41.20 L40.70 41.20 M42.68 41.20 L42.68 35.50 M45.65 41.20 L45.65 35.50 L48.12 35.50 L49.61 36.93 L49.61 39.78 L48.12 41.20 L45.65 41.20 M55.55 35.50 L51.59 35.50 L51.59 41.20 L55.55 41.20 M51.59 38.35 L54.56 38.35 M66.44 36.45 L65.45 35.50 L63.47 35.50 L62.48 36.45 L62.48 37.40 L63.47 38.35 L65.45 38.35 L66.44 39.30 L66.44 40.25 L65.45 41.20 L63.47 41.20 L62.48 40.25 M72.38 35.50 L68.42 35.50 L68.42 41.20 L72.38 41.20 M68.42 38.35 L71.39 38.35 M74.36 41.20 L74.36 37.40 L76.34 35.50 L78.32 37.40 L78.32 41.20 M74.36 38.83 L78.32 38.83 M80.30 35.50 L84.26 35.50 M82.28 35.50 L82.28 41.20 M95.15 36.45 L94.16 35.50 L92.18 35.50 L91.19 36.45 L91.19 40.25 L92.18 41.20 L94.16 41.20 L95.15 40.25 M97.13 35.50 L99.11 38.35 L101.09 35.50 M99.11 38.35 L99.11 41.20 M103.07 35.50 L103.07 41.20 L107.03 41.20 M109.01 41.20 L109.01 35.50 M111.98 41.20 L111.98 35.50 L115.94 41.20 L115.94 35.50 M117.92 41.20 L117.92 35.50 L120.39 35.50 L121.88 36.93 L121.88 39.78 L120.39 41.20 L117.92 41.20 M127.82 35.50 L123.86 35.50 L123.86 41.20 L127.82 41.20 M123.86 38.35 L126.83 38.35 M129.80 41.20 L129.80 35.50 L132.77 35.50 L133.76 36.45 L133.76 37.40 L132.77 38.35 L129.80 38.35 M131.78 38.35 L133.76 41.20" fill="none" stroke="#ffffff" stroke-width="1" stroke-linecap="round" stroke-linejoin="round"/>
<path d="M29.20 54.50 L29.20 48.50 L31.24 51.50 L33.28 48.50 L33.28 54.50 M36.34 54.50 L38.38 54.50 L39.40 53.50 L39.40 51.50 L38.38 50.50 L36.34 50.50 L35.32 51.50 L35.32 53.50 L36.34 54.50 M45.52 48.50 L45.52 54.50 M45.52 53.50 L44.50 54.50 L42.46 54.50 L41.44 53.50 L41.44 51.50 L42.46 50.50 L44.50 50.50 L45.52 51.50 M47.56 52.50 L51.64 52.50 L51.64 51.50 L50.62 50.50 L48.58 50.50 L47.56 51.50 L47.56 53.50 L48.58 54.50 L50.62 54.50 L51.64 53.50 M53.68 48.50 L53.68 54.50 M56.74 54.50 L56.74 53.90 M56.74 51.10 L56.74 50.50 M68.98 48.50 L68.98 53.50 L67.96 54.50 L65.92 54.50 L64.90 53.50 M75.10 49.50 L74.08 48.50 L72.04 48.50 L71.02 49.50 L71.02 53.50 L72.04 54.50 L74.08 54.50 L75.10 53.50 M81.22 48.50 L77.14 48.50 L77.14 54.50 M77.14 51.50 L80.20 51.50 M88.36 49.50 L89.38 48.50 L91.42 48.50 L92.44 49.50 L92.44 50.50 L88.36 54.50 L92.44 54.50 M98.56 48.50 L94.48 48.50 L94.48 51.00 L97.54 51.00 L98.56 52.00 L98.56 53.50 L97.54 54.50 L95.50 54.50 L94.48 53.50 M100.60 54.50 L104.68 50.50 M100.60 50.50 L104.68 54.50 M106.72 49.50 L107.74 48.50 L109.78 48.50 L110.80 49.50 L110.80 50.50 L106.72 54.50 L110.80 54.50 M113.86 54.50 L115.90 54.50 L116.92 53.50 L116.92 49.50 L115.90 48.50 L113.86 48.50 L112.84 49.50 L112.84 53.50 L113.86 54.50 M119.47 51.50 L122.53 51.50 M129.16 49.50 L128.14 48.50 L126.10 48.50 L125.08 49.50 L125.08 50.50 L126.10 51.50 L128.14 51.50 L129.16 52.50 L129.16 53.50 L128.14 54.50 L126.10 54.50 L125.08 53.50" fill="none" stroke="#55e655" stroke-width="1" stroke-linecap="round" stroke-linejoin="round"/>
</svg>
</body></html>
